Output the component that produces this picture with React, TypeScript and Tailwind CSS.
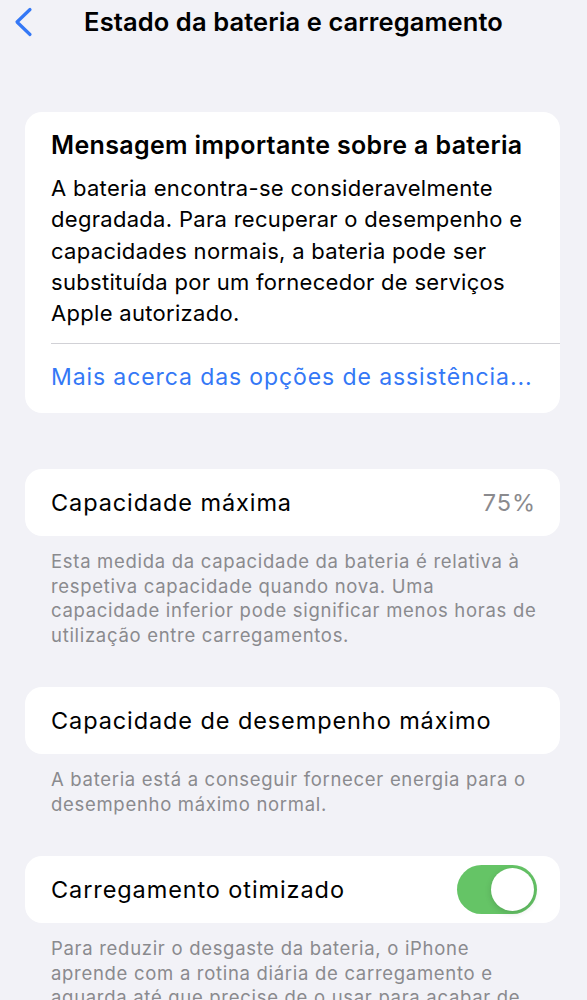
import React from 'react';

function Toggle({ on }: { on: boolean }) {
  return (
    <div
      className={`w-[80px] h-[49px] rounded-full p-[3px] flex ${on ? 'bg-[#65c466] justify-end' : 'bg-[#e9e9ea] justify-start'}`}
    >
      <div className="w-[43px] h-[43px] rounded-full bg-white shadow-[0_2px_6px_rgba(0,0,0,0.15)]" />
    </div>
  );
}

function Footer({ children }: { children: React.ReactNode }) {
  return (
    <p className="pl-[51px] pr-[44px] mt-[13px] text-[18.5px] leading-[24.5px] tracking-[0.7px] text-[#8a8a8e]">
      {children}
    </p>
  );
}

export default function App() {
  return (
    <div
      className="min-h-screen bg-[#f2f2f7] text-black overflow-hidden"
      style={{ fontFamily: 'Inter, "Noto Sans", sans-serif' }}
    >
      {/* Nav bar */}
      <div className="h-[44px] grid grid-cols-[1fr_auto_1fr] items-center">
        <div className="pl-[12px] flex items-center">
          <svg width="22" height="30" viewBox="0 0 22 30" fill="none">
            <path d="M18 2.5 L5 15 L18 27.5" stroke="#3478f6" strokeWidth="3.2" strokeLinecap="round" strokeLinejoin="round" />
          </svg>
        </div>
        <h1 className="text-[25.5px] font-semibold tracking-[0.1px] whitespace-nowrap">
          Estado da bateria e carregamento
        </h1>
        <div />
      </div>

      <div className="pl-[25px] pr-[27px] pt-[68px]">
        {/* Important message card */}
        <div className="bg-white rounded-[17px]">
          <div className="pl-[26px] pr-[20px] pt-[16px] pb-[14px]">
            <h2 className="text-[25px] leading-[34px] font-semibold tracking-[0.35px] whitespace-nowrap">
              Mensagem importante sobre a bateria
            </h2>
            <p className="mt-[11px] text-[22px] leading-[31.3px] tracking-[0.3px]">
              A bateria encontra-se consideravelmente degradada. Para recuperar o desempenho e capacidades normais, a bateria pode ser substituída por um fornecedor de serviços Apple autorizado.
            </p>
          </div>
          <div className="ml-[26px] h-px bg-[#d1d1d6]" />
          <div className="h-[69px] pl-[26px] flex items-center pb-[3px]">
            <span className="text-[23px] tracking-[0.9px] text-[#3478f6] whitespace-nowrap">
              Mais acerca das opções de assistência...
            </span>
          </div>
        </div>
      </div>

      {/* Maximum capacity */}
      <div className="pl-[25px] pr-[27px] mt-[56px]">
        <div className="bg-white rounded-[17px] h-[67px] pl-[26px] pr-[24px] flex items-center justify-between text-[23.5px] tracking-[0.9px]">
          <span>Capacidade máxima</span>
          <span className="text-[#8a8a8e]">75%</span>
        </div>
      </div>
      <Footer>
        Esta medida da capacidade da bateria é relativa à respetiva capacidade quando nova. Uma capacidade inferior pode significar menos horas de utilização entre carregamentos.
      </Footer>

      {/* Peak performance */}
      <div className="pl-[25px] pr-[27px] mt-[40px]">
        <div className="bg-white rounded-[17px] h-[67px] pl-[26px] pr-[24px] flex items-center text-[23.5px] tracking-[0.9px]">
          <span>Capacidade de desempenho máximo</span>
        </div>
      </div>
      <Footer>
        A bateria está a conseguir fornecer energia para o desempenho máximo normal.
      </Footer>

      {/* Optimised charging */}
      <div className="pl-[25px] pr-[27px] mt-[40px]">
        <div className="bg-white rounded-[17px] h-[67px] pl-[26px] pr-[23px] flex items-center justify-between text-[23.5px] tracking-[0.9px]">
          <span>Carregamento otimizado</span>
          <Toggle on />
        </div>
      </div>
      <Footer>
        Para reduzir o desgaste da bateria, o iPhone aprende com a rotina diária de carregamento e aguarda até que precise de o usar para acabar de carregar acima de 80%.
      </Footer>
    </div>
  );
}
